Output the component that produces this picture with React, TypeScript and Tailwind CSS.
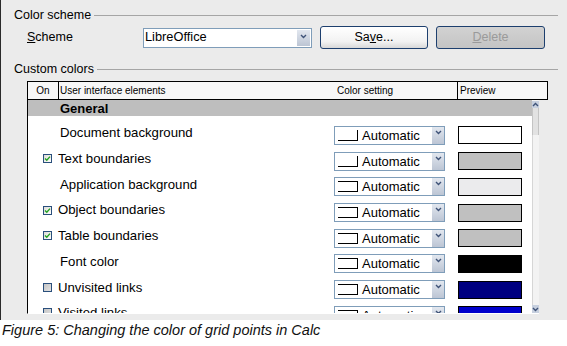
import React from "react";

type Row = { label: string; cb: "none" | "on" | "off"; color: string; top: boolean };

const rows: Row[] = [
  { label: "Document background", cb: "none", color: "#ffffff", top: false },
  { label: "Text boundaries", cb: "on", color: "#c0c0c0", top: false },
  { label: "Application background", cb: "none", color: "#ebebed", top: true },
  { label: "Object boundaries", cb: "on", color: "#c0c0c0", top: true },
  { label: "Table boundaries", cb: "on", color: "#c0c0c0", top: true },
  { label: "Font color", cb: "none", color: "#000000", top: true },
  { label: "Unvisited links", cb: "off", color: "#000080", top: true },
  { label: "Visited links", cb: "off", color: "#0000cc", top: true },
];

function Chevron({ up = false }: { up?: boolean }) {
  return (
    <svg width="7" height="5" viewBox="0 0 7 5">
      <path
        d={up ? "M1 4l2.5-2.5L6 4" : "M1 1l2.5 2.5L6 1"}
        stroke="#3f5378"
        strokeWidth="1.4"
        fill="none"
      />
    </svg>
  );
}

function CheckBox({ on }: { on: boolean }) {
  return (
    <div
      className={
        "w-[9px] h-[9px] border border-[#2a4f7c] flex items-center justify-center " +
        (on ? "bg-[linear-gradient(135deg,#dcdcd6,#ffffff)]" : "bg-[linear-gradient(135deg,#c4c4c4,#e2e2e2)]")
      }
    >
      {on && (
        <svg width="7" height="7" viewBox="0 0 7 7">
          <path d="M1 3.4l1.8 1.8L6 1.6" stroke="#21a121" strokeWidth="1.4" fill="none" />
        </svg>
      )}
    </div>
  );
}

export default function App() {
  return (
    <div className="w-[567px] h-[346px] flex flex-col overflow-hidden bg-white text-black font-['Liberation_Sans',Arial,sans-serif]">
      <div className="h-[320px] bg-[#ebebeb] border-l border-[#2a2a2a] flex flex-col pt-[8px]">
        {/* Color scheme */}
        <div className="flex items-center h-[14px] pl-[13px] pr-[9px]">
          <span className="text-[12.5px] leading-none whitespace-nowrap">Color scheme</span>
          <div className="flex-1 h-px bg-[#a5a5a5] ml-[3px]" />
        </div>

        {/* Scheme row */}
        <div className="mt-[4px] h-[23px] flex items-center pl-[26px]">
          <div className="w-[116px] text-[12.5px] leading-none">
            <span className="underline">S</span>cheme
          </div>
          <div className="w-[169px] h-[20px] border border-[#7f9db9] bg-white flex items-center">
            <span className="pl-[1px] text-[12.8px] leading-none">LibreOffice</span>
            <div className="ml-auto mr-[1px] w-[13px] h-[16px] bg-[linear-gradient(#e2e7ef,#bcc5d4)] flex items-start justify-center pt-[4px]">
              <Chevron />
            </div>
          </div>
          <div className="ml-[8px] w-[108px] h-[23px] rounded-[3px] border border-[#1d3f6e] bg-[linear-gradient(#ffffff,#f2f2f2_70%,#d8d8d8)] flex items-center justify-center text-[12.5px] leading-none">
            Sa<span className="underline">v</span>e...
          </div>
          <div className="ml-[8px] w-[109px] h-[23px] rounded-[3px] border border-[#1d3f6e] bg-[linear-gradient(#d2d2d2,#c4c4c4)] flex items-center justify-center text-[12.5px] leading-none text-[#9a9a9a]">
            <span className="underline">D</span>elete
          </div>
        </div>

        {/* Custom colors */}
        <div className="mt-[13px] flex items-center h-[14px] pl-[13px] pr-[9px]">
          <span className="text-[12.5px] leading-none whitespace-nowrap">Custom colors</span>
          <div className="flex-1 h-px bg-[#a5a5a5] ml-[3px]" />
        </div>

        {/* Table */}
        <div className="mt-[5px] ml-[26px] flex flex-col">
          <div className="w-[521px] h-[19px] border border-black bg-[#f7f7f7] flex text-[10px] leading-none">
            <div className="w-[31px] border-r border-black flex items-center justify-center">On</div>
            <div className="w-[399px] border-r border-black flex items-center">
              <span className="w-[278px] pl-[1px] whitespace-nowrap">User interface elements</span>
              <span className="whitespace-nowrap">Color setting</span>
            </div>
            <div className="flex-1 flex items-center pl-[2px]">Preview</div>
          </div>

          <div className="w-[512px] h-[214px] border-l border-black border-b border-b-white bg-white flex overflow-hidden">
            <div className="w-[504px] flex flex-col">
              <div className="h-[16px] shrink-0 bg-[#bebebe] pl-[32px] flex items-center text-[13px] font-bold leading-none">
                General
              </div>
              <div className="pt-[6.65px] flex flex-col">
                {rows.map((r) => (
                  <div key={r.label} className="h-[25.7px] shrink-0 flex items-center">
                    <div
                      className={
                        "w-[306px] flex items-center pb-[5px] text-[13.2px] leading-none whitespace-nowrap " +
                        (r.cb === "none" ? "pl-[32px]" : "pl-[15px]")
                      }
                    >
                      {r.cb !== "none" && <CheckBox on={r.cb === "on"} />}
                      <span className={r.cb !== "none" ? "ml-[6px]" : ""}>{r.label}</span>
                    </div>
                    <div className="w-[111px] h-[19px] border border-[#7f9db9] bg-white flex items-center">
                      <div
                        className={
                          "ml-[3px] w-[20px] h-[11px] border-b border-r border-black " +
                          (r.top ? "border-t" : "")
                        }
                      />
                      <span className="ml-[4px] text-[13px] leading-none">Automatic</span>
                      <div className="ml-auto w-[12px] self-stretch bg-[linear-gradient(#e2e7ef,#bcc5d4)] flex items-start justify-center pt-[3px]">
                        <Chevron />
                      </div>
                    </div>
                    <div
                      className="ml-[13px] w-[64px] h-[18px] border border-black"
                      style={{ backgroundColor: r.color }}
                    />
                  </div>
                ))}
              </div>
            </div>
            {/* scrollbar */}
            <div className="w-[7px] flex flex-col bg-[#f3f3f3] pt-[1px]">
              <div className="h-[7px] bg-[#c7d0df] flex items-center justify-center">
                <Chevron up />
              </div>
              <div className="h-[27px] bg-[#e2e2e2] border-x border-[#c4c4c4]" />
              <div className="flex-1 border-l border-[#d6d6d6]" />
              <div className="h-[8px] bg-[#c7d0df] flex items-center justify-center">
                <Chevron />
              </div>
            </div>
          </div>
        </div>
      </div>

      <div className="h-[26px] bg-white pl-[2px] pt-[1.5px] text-[14.5px] italic leading-[17px] text-[#111] whitespace-nowrap">
        Figure 5: Changing the color of grid points in Calc
      </div>
    </div>
  );
}
